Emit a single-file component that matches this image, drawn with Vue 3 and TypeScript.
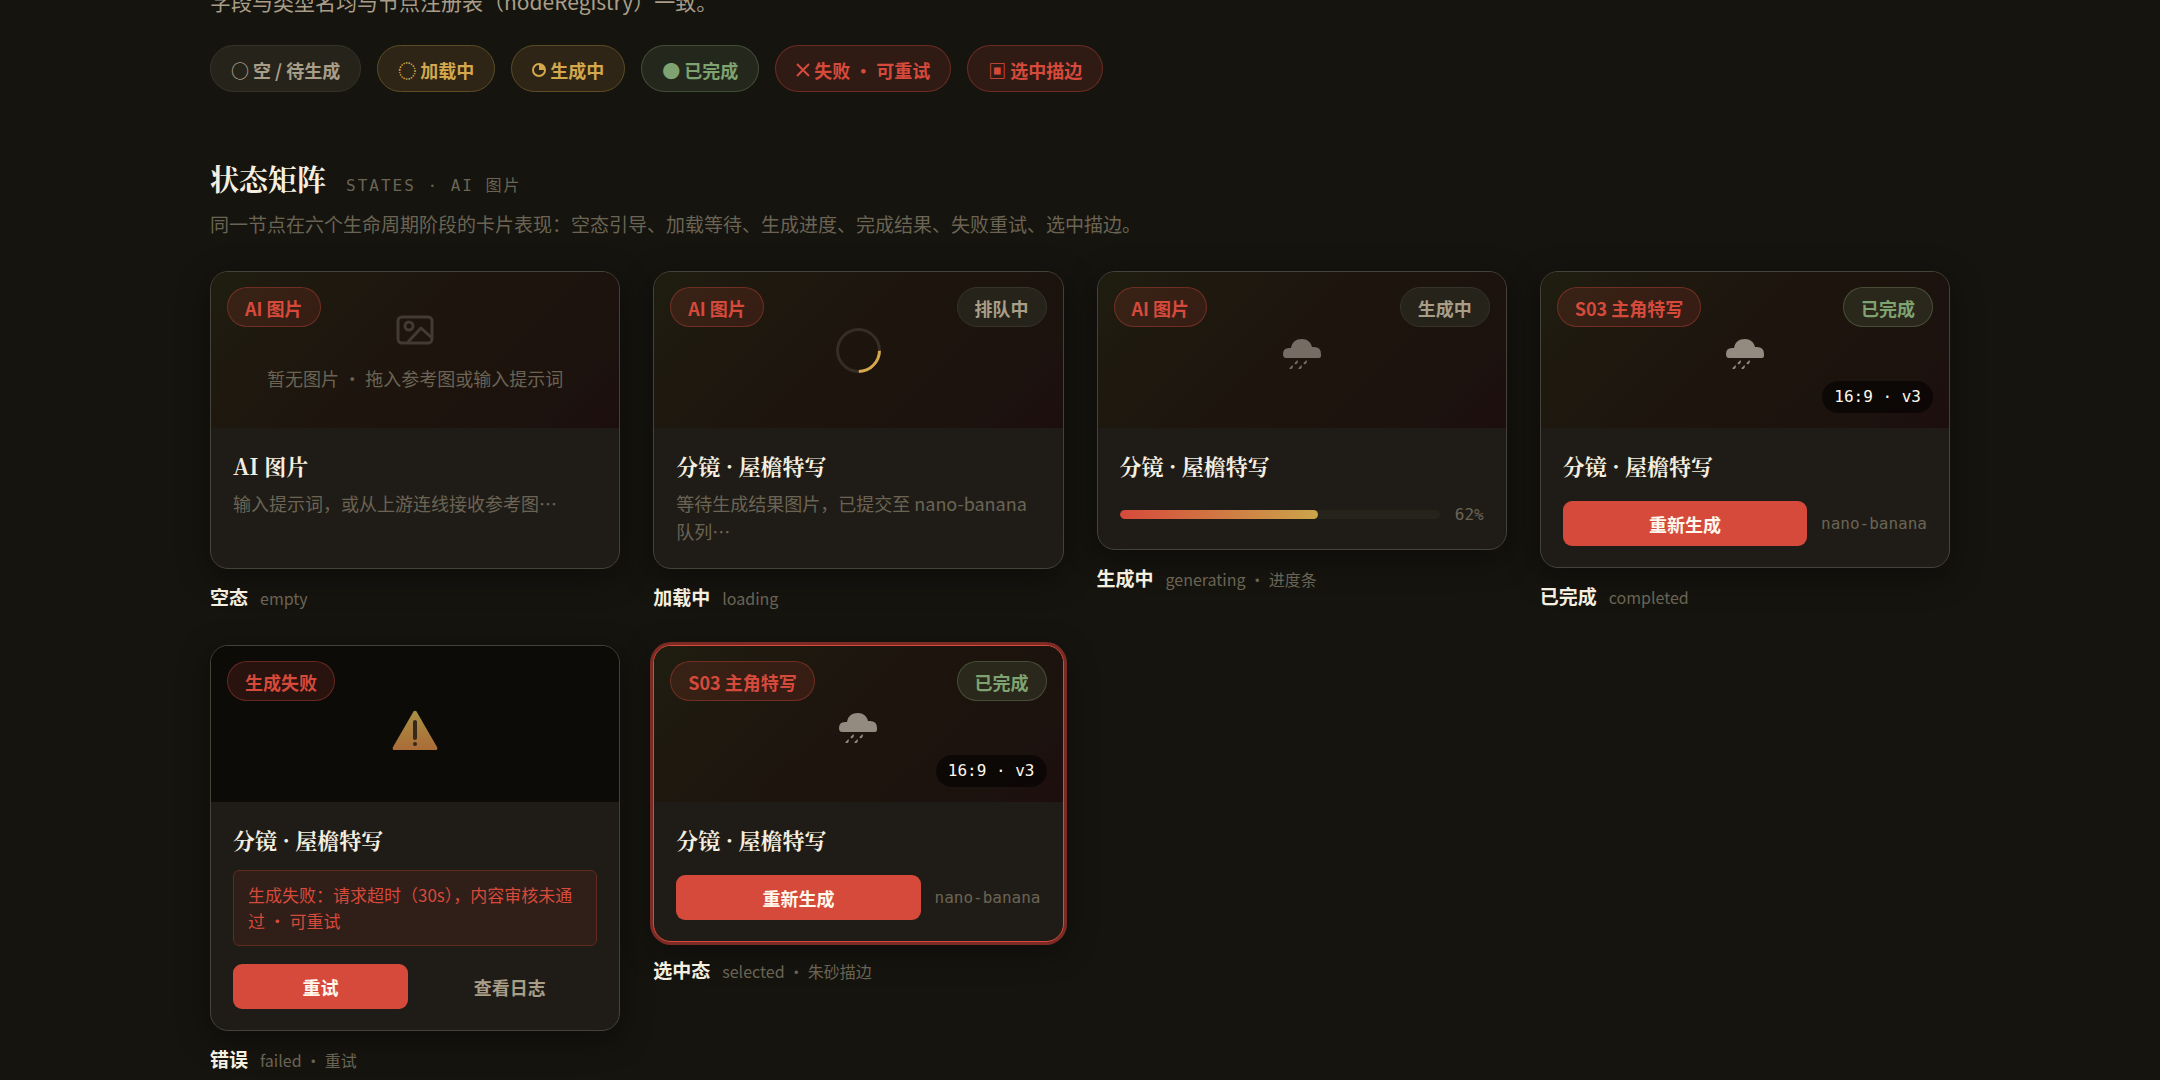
<script setup lang="ts">
type Icon = 'image' | 'spinner' | 'rain' | 'warning'

interface Chip {
  glyph?: string
  mark?: 'quarter' | 'cross'
  label: string
  tone: string
}

interface StateCard {
  id: string
  tag: string
  status?: string
  statusTone?: string
  icon: Icon
  hint?: string
  badge?: string
  title: string
  desc?: string
  progress?: number
  error?: string
  model?: string
  name: string
  note: string
}

const chips: Chip[] = [
  { glyph: '○', label: '空 / 待生成', tone: 'muted' },
  { glyph: '◌', label: '加载中', tone: 'gold' },
  { mark: 'quarter', label: '生成中', tone: 'gold' },
  { glyph: '●', label: '已完成', tone: 'green' },
  { mark: 'cross', label: '失败 · 可重试', tone: 'red' },
  { glyph: '▣', label: '选中描边', tone: 'red' },
]

const cards: StateCard[] = [
  {
    id: 'empty', tag: 'AI 图片', icon: 'image', hint: '暂无图片 · 拖入参考图或输入提示词',
    title: 'AI 图片', desc: '输入提示词，或从上游连线接收参考图…', name: '空态', note: 'empty',
  },
  {
    id: 'loading', tag: 'AI 图片', status: '排队中', statusTone: 'muted', icon: 'spinner',
    title: '分镜 · 屋檐特写', desc: '等待生成结果图片，已提交至 nano-banana 队列…', name: '加载中', note: 'loading',
  },
  {
    id: 'generating', tag: 'AI 图片', status: '生成中', statusTone: 'muted', icon: 'rain',
    title: '分镜 · 屋檐特写', progress: 62, name: '生成中', note: 'generating · 进度条',
  },
  {
    id: 'completed', tag: 'S03 主角特写', status: '已完成', statusTone: 'green', icon: 'rain', badge: '16:9 · v3',
    title: '分镜 · 屋檐特写', model: 'nano-banana', name: '已完成', note: 'completed',
  },
  {
    id: 'failed', tag: '生成失败', icon: 'warning', title: '分镜 · 屋檐特写',
    error: '生成失败：请求超时（30s），内容审核未通过 · 可重试', name: '错误', note: 'failed · 重试',
  },
  {
    id: 'selected', tag: 'S03 主角特写', status: '已完成', statusTone: 'green', icon: 'rain', badge: '16:9 · v3',
    title: '分镜 · 屋檐特写', model: 'nano-banana', name: '选中态', note: 'selected · 朱砂描边',
  },
]
</script>

<template>
  <main class="page" lang="zh-CN">
    <p class="intro">字段与类型名均与节点注册表（nodeRegistry）一致。</p>
    <ul class="chips">
      <li v-for="chip in chips" :key="chip.label" class="pill chip" :class="chip.tone">
        <svg v-if="chip.mark === 'quarter'" class="mark" viewBox="0 0 14 14" aria-hidden="true">
          <circle cx="7" cy="7" r="6" fill="none" stroke="currentColor" stroke-width="2" />
          <path d="M7 1a6 6 0 0 1 6 6H7z" fill="currentColor" />
        </svg>
        <svg v-else-if="chip.mark === 'cross'" class="mark" viewBox="0 0 14 14" aria-hidden="true">
          <path d="M1 1l12 12M13 1 1 13" fill="none" stroke="currentColor" stroke-width="2" />
        </svg>
        <span v-else>{{ chip.glyph }}</span>
        <span>{{ chip.label }}</span>
      </li>
    </ul>

    <section>
      <header class="heading">
        <h2>状态矩阵</h2>
        <span class="eyebrow">STATES · AI 图片</span>
      </header>
      <p class="lead">同一节点在六个生命周期阶段的卡片表现：空态引导、加载等待、生成进度、完成结果、失败重试、选中描边。</p>

      <div class="grid">
        <figure v-for="card in cards" :key="card.id" class="cell">
          <article class="card" :class="card.id">
            <div class="media">
              <span class="pill tag red">{{ card.tag }}</span>
              <span v-if="card.status" class="pill status" :class="card.statusTone">{{ card.status }}</span>
              <svg v-if="card.icon === 'image'" class="icon-image" viewBox="0 0 44 44" aria-hidden="true">
                <g fill="none" stroke="currentColor" stroke-width="3" stroke-linejoin="round">
                  <rect x="5" y="9" width="34" height="26" rx="4" />
                  <circle cx="16" cy="18" r="4" />
                  <path d="M15 34 28 20l11 10" />
                </g>
              </svg>
              <span v-else-if="card.icon === 'spinner'" class="spinner"></span>
              <svg v-else-if="card.icon === 'rain'" class="icon-rain" viewBox="0 0 38 30" aria-hidden="true">
                <g fill="currentColor">
                  <path d="M3 19Q0 19 0 15Q0 9 6 9H8C9 3 13 0 19 0C24 0 28 3 29 8H31Q38 8 38 15V17Q38 19 36 19Z" />
                  <path d="M14.500 21q1 3-1 4t-2-1zM23.500 21q1 3-1 4t-2-1zM9.500 26q1 3-1 4t-2-1zM18.500 26q1 3-1 4t-2-1z" />
                </g>
              </svg>
              <svg v-else class="icon-warning" viewBox="0 0 46 40" aria-hidden="true">
                <defs>
                  <linearGradient id="amber" x1="0" y1="0" x2="0" y2="1">
                    <stop offset="0" stop-color="#a99144" />
                    <stop offset="1" stop-color="#aa6c37" />
                  </linearGradient>
                </defs>
                <path d="M21.500 1.500Q23 0 24.500 1.500L45 37Q46 40 44 40H2Q0 40 1 37Z" fill="url(#amber)" />
                <rect x="21" y="10" width="4" height="20" rx="2" fill="#35281c" />
                <circle cx="23" cy="34" r="2" fill="#35281c" />
              </svg>
              <span v-if="card.hint" class="hint">{{ card.hint }}</span>
              <span v-if="card.badge" class="badge">{{ card.badge }}</span>
            </div>
            <div class="body">
              <h3>{{ card.title }}</h3>
              <p v-if="card.desc" class="desc">{{ card.desc }}</p>
              <div v-if="card.progress" class="progress">
                <div class="track"><div class="fill" :style="{ width: card.progress + '%' }"></div></div>
                <span class="mono">{{ card.progress }}%</span>
              </div>
              <p v-if="card.error" class="error">{{ card.error }}</p>
              <div v-if="card.error" class="actions">
                <button type="button" class="primary">重试</button>
                <button type="button" class="ghost">查看日志</button>
              </div>
              <div v-if="card.model" class="actions">
                <button type="button" class="primary">重新生成</button>
                <span class="mono">{{ card.model }}</span>
              </div>
            </div>
          </article>
          <figcaption><strong>{{ card.name }}</strong><span>{{ card.note }}</span></figcaption>
        </figure>
      </div>
    </section>
  </main>
</template>

<style>
body {
  margin: 0;
  background: #15140f;
}
</style>

<style scoped>
* {
  box-sizing: border-box;
}
.page {
  max-width: 1820px;
  margin: 0 auto;
  padding: 0 40px;
  min-height: 100vh;
  overflow: hidden;
  color: #a89e88;
  font-family: "Noto Sans CJK SC", sans-serif;
  font-size: 18px;
}
p, h2, h3, ul, figure {
  margin: 0;
}
.intro {
  height: 17px;
  display: flex;
  align-items: flex-end;
  font-size: 21px;
  line-height: 32px;
}
.chips {
  display: flex;
  flex-wrap: wrap;
  gap: 16px;
  margin-top: 28px;
  padding: 0;
  list-style: none;
}
.pill {
  display: inline-flex;
  align-items: center;
  border: 1px solid;
  border-radius: 24px;
  font-weight: 700;
  line-height: 24px;
  white-space: nowrap;
}
.chip {
  gap: 4px;
  height: 47px;
  padding: 2px 20px 0;
}
.mark {
  width: 14px;
  height: 14px;
}
.muted {
  color: #a89e88;
  background: #26231b;
  border-color: #35332a;
}
.gold {
  color: #d4a84b;
  background: #2e2516;
  border-color: #5c4d26;
}
.green {
  color: #7fa370;
  background: rgba(127, 163, 112, 0.14);
  border-color: rgba(127, 163, 112, 0.32);
}
.red {
  color: #d64a3c;
  background: rgba(214, 74, 60, 0.14);
  border-color: rgba(214, 74, 60, 0.36);
}
.heading {
  display: flex;
  align-items: baseline;
  gap: 20px;
  margin-top: 64px;
}
h2 {
  color: #f5efe0;
  font: 700 29px/46px "Noto Serif CJK SC", "Noto Serif SC", "Liberation Serif", "Noto Sans CJK SC", serif;
}
.eyebrow {
  color: #6b6454;
  font-family: "DejaVu Sans Mono", "Noto Sans CJK SC", monospace;
  font-size: 16px;
  letter-spacing: 2px;
}
.lead {
  margin-top: 6px;
  color: #6b6454;
  font-size: 19px;
  line-height: 32px;
}
.grid {
  display: grid;
  grid-template-columns: repeat(4, minmax(0, 1fr));
  align-items: start;
  gap: 32px 33px;
  margin-top: 31px;
}
.card {
  overflow: hidden;
  border: 1px solid #45423a;
  border-radius: 18px;
  background: #1f1c17;
  box-shadow: 0 8px 32px rgba(0, 0, 0, 0.4);
}
.selected {
  border-color: #d64a3c;
  box-shadow: 0 0 0 3px #7c2b24, 0 8px 32px rgba(0, 0, 0, 0.4);
}
.media {
  position: relative;
  display: flex;
  flex-direction: column;
  align-items: center;
  justify-content: center;
  gap: 12px;
  height: 156px;
  color: #6b6454;
  background: linear-gradient(135deg, #1f1d10 0%, #1e180f 25%, #1d140d 55%, #1c120e 85%, #1d0e0e 100%);
}
.failed .media {
  background: #0c0b07;
}
.tag, .status {
  position: absolute;
  top: 15px;
  height: 40px;
  padding: 1px 17px 0;
}
.tag {
  left: 16px;
}
.status {
  right: 16px;
}
.badge {
  position: absolute;
  right: 16px;
  bottom: 15px;
  padding: 0 12px;
  border-radius: 16px;
  color: #fff8ec;
  background: rgba(0, 0, 0, 0.55);
  font: 400 16px/32px "DejaVu Sans Mono", monospace;
}
.icon-image {
  width: 44px;
  height: 44px;
  color: #433b31;
}
.hint {
  line-height: 28px;
}
.spinner {
  width: 45px;
  height: 45px;
  border: 3px solid #352d26;
  border-bottom-color: #d4a84b;
  border-radius: 50%;
  transform: rotate(-45deg);
}
.icon-rain {
  width: 38px;
  height: 30px;
  margin-top: 8px;
  color: #938a80;
}
.generating .icon-rain {
  color: #756c63;
}
.icon-warning {
  width: 46px;
  height: 40px;
  margin-top: 12px;
}
.body {
  padding: 21px 22px;
}
h3 {
  color: #f5efe0;
  font: 700 22px/34px "Noto Serif CJK SC", "Noto Serif SC", "Liberation Serif", "Noto Sans CJK SC", serif;
}
.desc {
  min-height: 58px;
  margin-top: 6px;
  color: #6b6454;
  line-height: 28px;
}
.progress {
  display: flex;
  align-items: center;
  gap: 15px;
  height: 27px;
  margin-top: 18px;
}
.track {
  flex: 1;
  height: 9px;
  overflow: hidden;
  border-radius: 5px;
  background: #26231b;
}
.fill {
  height: 100%;
  border-radius: 5px;
  background: linear-gradient(90deg, #d64a3c, #cba54a);
}
.mono {
  color: #6b6454;
  font-family: "DejaVu Sans Mono", monospace;
  font-size: 16px;
}
.error {
  margin-top: 13px;
  padding: 11px 14px;
  border: 1px solid #62291f;
  border-radius: 6px;
  color: #d64a3c;
  background: #301e18;
  font-size: 17px;
  line-height: 26px;
}
.actions {
  display: flex;
  align-items: center;
  gap: 14px;
  margin-top: 18px;
}
button {
  flex: 1;
  height: 45px;
  padding: 0;
  border: 0;
  border-radius: 9px;
  color: #fff8ec;
  background: #d64a3c;
  font: 700 18px/28px "Noto Sans CJK SC", sans-serif;
}
.ghost {
  color: #a89e88;
  background: transparent;
}
figcaption {
  display: flex;
  align-items: baseline;
  gap: 12px;
  margin-top: 13px;
  line-height: 30px;
}
figcaption strong {
  color: #f5efe0;
  font-size: 19px;
}
figcaption span {
  color: #6b6454;
  font-size: 16px;
}
</style>
